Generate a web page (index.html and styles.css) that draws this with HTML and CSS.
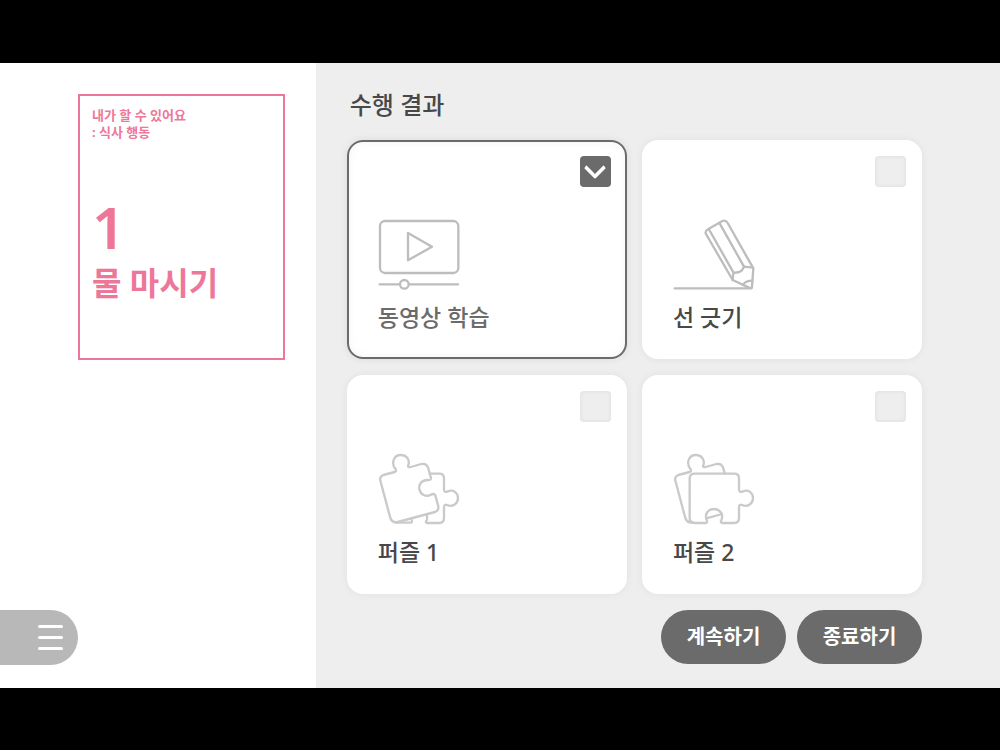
FILE: index.html
```html
<!DOCTYPE html>
<html lang="ko">
<head>
<meta charset="utf-8">
<meta name="viewport" content="width=device-width, initial-scale=1">
<title>수행 결과</title>
<link rel="stylesheet" href="styles.css">
</head>
<body>
<div class="stage">
  <aside class="sidebar">
    <section class="lesson">
      <p class="lesson-series">내가 할 수 있어요<br>: 식사 행동</p>
      <p class="lesson-number">1</p>
      <h1 class="lesson-title">물 마시기</h1>
    </section>
    <button class="menu" type="button" aria-label="메뉴">
      <span class="menu-bar"></span>
      <span class="menu-bar"></span>
      <span class="menu-bar"></span>
    </button>
  </aside>
  <main class="results">
    <h2 class="results-title">수행 결과</h2>
    <div class="cards">
      <label class="card">
        <input class="check" type="checkbox" checked>
        <svg class="icon" viewBox="36 36 252 219" aria-hidden="true">
          <rect x="45" y="45" width="235" height="156" rx="15"/>
          <path d="M129 81V163L201 122Z"/>
          <path d="M44 235H104M132 235H279"/>
          <circle cx="118" cy="235" r="13"/>
        </svg>
        <span class="card-name">동영상 학습</span>
      </label>
      <label class="card">
        <input class="check" type="checkbox">
        <svg class="icon" viewBox="36 36 252 219" aria-hidden="true">
          <path d="M44 247H272Q276 247 276 242L280 187L203 51Q197 41 187 45L144 70Q134 76 138 84L218 222L272 247"/>
          <path d="M148 72L220 199M179 52L252 182"/>
          <path d="M279 185L252 182Q247 195 238 198L220 201L218 222"/>
          <path d="M249 237Q256 224 277 224"/>
        </svg>
        <span class="card-name">선 긋기</span>
      </label>
      <label class="card">
        <input class="check" type="checkbox">
        <svg class="icon icon-light" viewBox="36 36 252 219" aria-hidden="true">
          <path d="M55 102L89 93Q95 91 92 85C76 65 88 42 107 42C127 42 136 60 129 75Q130 80 137 78L169 69Q184 66 189 79L198 111Q198 119 187 117C168 118 161 131 163 144C166 161 183 169 198 161Q208 156 211 163L220 196Q222 208 210 213L98 243Q82 247 76 231L46 119Q43 107 55 102Z"/>
          <path d="M194 98H223Q237 98 237 112V146Q238 155 247 152C265 143 279 156 279 171C279 187 264 200 246 192Q237 189 237 199V231Q237 246 223 246H186Q180 244 185 238Q188 231 185 221"/>
          <path d="M94 245H137Q144 244 139 233"/>
        </svg>
        <span class="card-name">퍼즐 1</span>
      </label>
      <label class="card">
        <input class="check" type="checkbox">
        <svg class="icon icon-light" viewBox="36 36 252 219" aria-hidden="true">
          <path d="M104 98H223Q237 98 237 112V146Q238 155 247 152C265 143 279 156 279 171C279 187 264 200 246 192Q237 189 237 199V231Q237 246 223 246H186Q180 244 184 238C192 219 179 204 162 204C144 204 133 219 140 237Q143 244 138 246H104Q89 246 89 231V112Q89 98 104 98Z"/>
          <path d="M98 244Q82 247 76 231L46 119Q43 107 55 102L89 93Q95 91 92 85C76 65 88 42 107 42C127 42 136 60 129 75Q130 80 137 78L169 69Q184 66 189 79L194 97M139 232L186 219"/>
        </svg>
        <span class="card-name">퍼즐 2</span>
      </label>
    </div>
    <div class="actions">
      <button class="action" type="button">계속하기</button>
      <button class="action" type="button">종료하기</button>
    </div>
  </main>
</div>
</body>
</html>
```
FILE: styles.css
```css
*, *::before { box-sizing: border-box; }

body {
  margin: 0;
  min-height: 100vh;
  display: flex;
  align-items: center;
  background: #000;
  font-family: "Noto Sans", "Noto Sans CJK KR", sans-serif;
  color: #484848;
}

h1, h2, p { margin: 0; }

.stage {
  width: 100%;
  aspect-ratio: 16 / 10;
  display: grid;
  grid-template-columns: 6fr 13fr;
  background: #fff;
}

.sidebar {
  display: flex;
  flex-direction: column;
  justify-content: space-between;
  align-items: flex-start;
  padding: 31px 31px 23px 0;
}

.lesson {
  align-self: stretch;
  margin-left: 78px;
  padding: 11px 12px 51px;
  border: 2px solid #ee7799;
  color: #ee7799;
}

.lesson-series {
  font-size: 13px;
  font-weight: 700;
  line-height: 17px;
}

.lesson-number {
  margin-top: 54px;
  font-size: 58px;
  font-weight: 600;
  line-height: 64px;
}

.lesson-title {
  font-size: 32px;
  font-weight: 700;
  line-height: 48px;
}

.menu {
  display: flex;
  flex-direction: column;
  align-items: flex-end;
  justify-content: center;
  gap: 8px;
  width: 78px;
  height: 55px;
  padding: 0 15px 0 0;
  border: 0;
  border-radius: 0 28px 28px 0;
  background: #b8b8b8;
}

.menu-bar {
  width: 25px;
  height: 3px;
  border-radius: 2px;
  background: #fff;
}

.results {
  display: flex;
  flex-direction: column;
  padding: 24px 78px 24px 31px;
  background: #eee;
}

.results-title {
  padding-left: 3px;
  font-size: 24px;
  font-weight: 500;
  line-height: 36px;
}

.cards {
  flex: 1;
  display: grid;
  grid-template-columns: 1fr 1fr;
  grid-template-rows: 1fr 1fr;
  gap: 16px 15px;
  margin-top: 17px;
}

.card {
  display: flex;
  flex-direction: column;
  padding: 16px 16px 25px 30px;
  border-radius: 16px;
  background: #fff;
  box-shadow: 0 0 8px rgba(0, 0, 0, 0.06);
}

.card:has(.check:checked) {
  color: #6b6b6b;
  box-shadow: inset 0 0 0 2px #6b6b6b, inset 0 0 12px rgba(0, 0, 0, 0.06), 0 0 8px rgba(0, 0, 0, 0.08);
}

.check {
  appearance: none;
  align-self: flex-end;
  display: grid;
  place-items: center;
  width: 31px;
  height: 31px;
  margin: 0;
  border-radius: 4px;
  background: #eee;
  box-shadow: inset 0 0 4px rgba(0, 0, 0, 0.08);
}

.check:checked {
  background: #6b6b6b;
  box-shadow: none;
}

.check:checked::before {
  content: "";
  width: 16px;
  height: 16px;
  margin-bottom: 7px;
  border: solid #fff;
  border-width: 0 4px 4px 0;
  border-radius: 2px;
  transform: rotate(45deg);
}

.icon {
  width: 84px;
  height: 73px;
  margin-top: auto;
  fill: none;
  stroke: #bdbdbd;
  stroke-width: 7;
  stroke-linecap: round;
  stroke-linejoin: round;
}

.icon-light { stroke: #cacaca; }

.card-name {
  margin-top: 9px;
  padding-left: 1px;
  font-size: 23px;
  font-weight: 500;
  line-height: 34px;
}

.actions {
  display: flex;
  justify-content: flex-end;
  gap: 11px;
  margin-top: 16px;
}

.action {
  width: 125px;
  height: 54px;
  padding: 0;
  border: 0;
  border-radius: 27px;
  background: #6b6b6b;
  color: #fff;
  font: 700 20px/30px "Noto Sans", "Noto Sans CJK KR", sans-serif;
}
```
